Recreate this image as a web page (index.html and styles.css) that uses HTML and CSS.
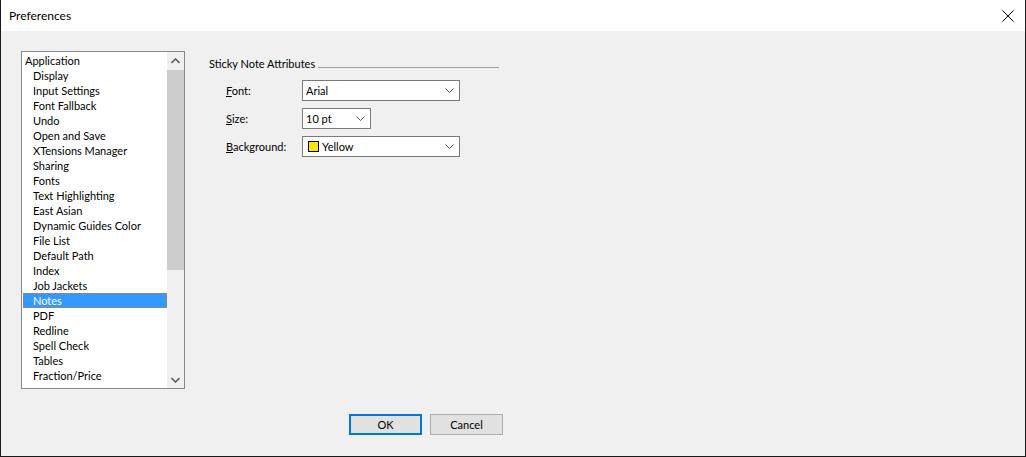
FILE: index.html
```html
<!DOCTYPE html>
<html lang="en">
<head>
  <meta charset="UTF-8" />
  <title>Preferences</title>
  <link rel="stylesheet" href="styles.css">
</head>
<body>
  <div class="window">
    <div class="titlebar">
      <span class="title">Preferences</span>
      <svg class="close" width="12" height="12" viewBox="0 0 12 12" aria-hidden="true">
        <path d="M0.5 0.5 L11.5 11.5 M11.5 0.5 L0.5 11.5" stroke="#000" stroke-width="1" fill="none"/>
      </svg>
    </div>

    <div class="content">
      <div class="top">
        <div class="listbox">
          <ul class="items">
            <li class="root">Application</li>
            <li>Display</li>
            <li>Input Settings</li>
            <li>Font Fallback</li>
            <li>Undo</li>
            <li>Open and Save</li>
            <li>XTensions Manager</li>
            <li>Sharing</li>
            <li>Fonts</li>
            <li>Text Highlighting</li>
            <li>East Asian</li>
            <li>Dynamic Guides Color</li>
            <li>File List</li>
            <li>Default Path</li>
            <li>Index</li>
            <li>Job Jackets</li>
            <li class="selected">Notes</li>
            <li>PDF</li>
            <li>Redline</li>
            <li>Spell Check</li>
            <li>Tables</li>
            <li>Fraction/Price</li>
          </ul>
          <div class="scrollbar">
            <div class="sb-btn">
              <svg width="9" height="6" viewBox="0 0 9 6"><path d="M0.5 5 L4.5 1 L8.5 5" stroke="#606060" stroke-width="1.6" fill="none"/></svg>
            </div>
            <div class="sb-track">
              <div class="sb-thumb"></div>
            </div>
            <div class="sb-btn">
              <svg width="9" height="6" viewBox="0 0 9 6"><path d="M0.5 1 L4.5 5 L8.5 1" stroke="#606060" stroke-width="1.6" fill="none"/></svg>
            </div>
          </div>
        </div>

        <div class="panel">
          <div class="group-head">
            <span>Sticky Note Attributes</span>
            <div class="group-line"></div>
          </div>

          <div class="field">
            <label><u>F</u>ont:</label>
            <div class="select wide">
              <span class="value">Arial</span>
              <svg class="chev" width="9" height="5" viewBox="0 0 9 5"><path d="M0.5 0.5 L4.5 4.5 L8.5 0.5" stroke="#555" stroke-width="1" fill="none"/></svg>
            </div>
          </div>

          <div class="field">
            <label><u>S</u>ize:</label>
            <div class="select narrow">
              <span class="value">10 pt</span>
              <svg class="chev" width="9" height="5" viewBox="0 0 9 5"><path d="M0.5 0.5 L4.5 4.5 L8.5 0.5" stroke="#555" stroke-width="1" fill="none"/></svg>
            </div>
          </div>

          <div class="field">
            <label><u>B</u>ackground:</label>
            <div class="select wide">
              <span class="value"><span class="swatch"></span>Yellow</span>
              <svg class="chev" width="9" height="5" viewBox="0 0 9 5"><path d="M0.5 0.5 L4.5 4.5 L8.5 0.5" stroke="#555" stroke-width="1" fill="none"/></svg>
            </div>
          </div>
        </div>
      </div>

      <div class="buttons">
        <button class="btn default">OK</button>
        <button class="btn">Cancel</button>
      </div>
    </div>
  </div>
</body>
</html>
```

FILE: styles.css
```css
html, body {
  margin: 0;
  padding: 0;
}

body {
  width: 1026px;
  height: 457px;
  overflow: hidden;
  font-family: Lato, 'Liberation Sans', sans-serif;
  font-size: 11px;
  color: #000;
  background: #f0f0f0;
}

.window {
  box-sizing: border-box;
  width: 1026px;
  height: 457px;
  border: 1px solid #1a1a1a;
  border-top: none;
  display: flex;
  flex-direction: column;
  background: #f0f0f0;
}

.titlebar {
  height: 31px;
  background: #fff;
  display: flex;
  align-items: center;
  justify-content: space-between;
  padding: 0 10px 0 8px;
  flex-shrink: 0;
}

.title {
  font-size: 12px;
  line-height: 16px;
}

.close {
  display: block;
  margin-right: 1px;
}

.content {
  flex: 1;
  display: flex;
  flex-direction: column;
  padding: 20px 0 0 20px;
}

.top {
  display: flex;
  gap: 24px;
}

/* list */
.listbox {
  box-sizing: border-box;
  width: 164px;
  height: 338px;
  border: 1px solid #828790;
  background: #fff;
  display: flex;
}

.items {
  list-style: none;
  margin: 0;
  padding: 1px 0 0 0;
  flex: 1;
  overflow: hidden;
}

.items li {
  height: 15px;
  line-height: 16px;
  padding-left: 10px;
  margin-left: 1px;
  white-space: nowrap;
}

.items li.root {
  padding-left: 2px;
}

.items li.selected {
  background: #3399ff;
  color: #fff;
  outline: 1px dotted #d08020;
  outline-offset: -1px;
}

.scrollbar {
  width: 17px;
  background: #f0f0f0;
  display: flex;
  flex-direction: column;
}

.sb-btn {
  height: 17px;
  display: flex;
  align-items: center;
  justify-content: center;
}

.sb-track {
  flex: 1;
  padding-top: 1px;
}

.sb-thumb {
  height: 200px;
  background: #cdcdcd;
}

/* right panel */
.panel {
  width: 290px;
  padding-top: 5px;
}

.group-head {
  display: flex;
  align-items: center;
  gap: 3px;
  line-height: 16px;
}

.group-line {
  flex: 1;
  height: 1px;
  background: #a0a0a0;
  margin-top: 7px;
}

.field {
  display: flex;
  align-items: center;
  margin-top: 7px;
  height: 21px;
}

.field + .field {
  margin-top: 7px;
}

.group-head + .field {
  margin-top: 8px;
}

.field label {
  width: 76px;
  padding-left: 17px;
}

.select {
  box-sizing: border-box;
  height: 21px;
  border: 1px solid #7a7a7a;
  background: #fff;
  display: flex;
  align-items: center;
  justify-content: space-between;
  padding: 0 5px 0 3px;
}

.select.wide {
  width: 158px;
}

.select.narrow {
  width: 69px;
}

.value {
  display: flex;
  align-items: center;
}

.swatch {
  box-sizing: border-box;
  width: 11px;
  height: 11px;
  border: 1px solid #000;
  background: #ffe600;
  margin: 0 3px 0 2px;
}

/* buttons */
.buttons {
  display: flex;
  gap: 8px;
  margin-top: 25px;
  padding-left: 328px;
}

.btn {
  box-sizing: border-box;
  width: 73px;
  height: 21px;
  border: 1px solid #adadad;
  background: #e1e1e1;
  font-family: inherit;
  font-size: 11px;
  color: #000;
  padding: 0;
}

.btn.default {
  border: 2px solid #0078d7;
}
```
